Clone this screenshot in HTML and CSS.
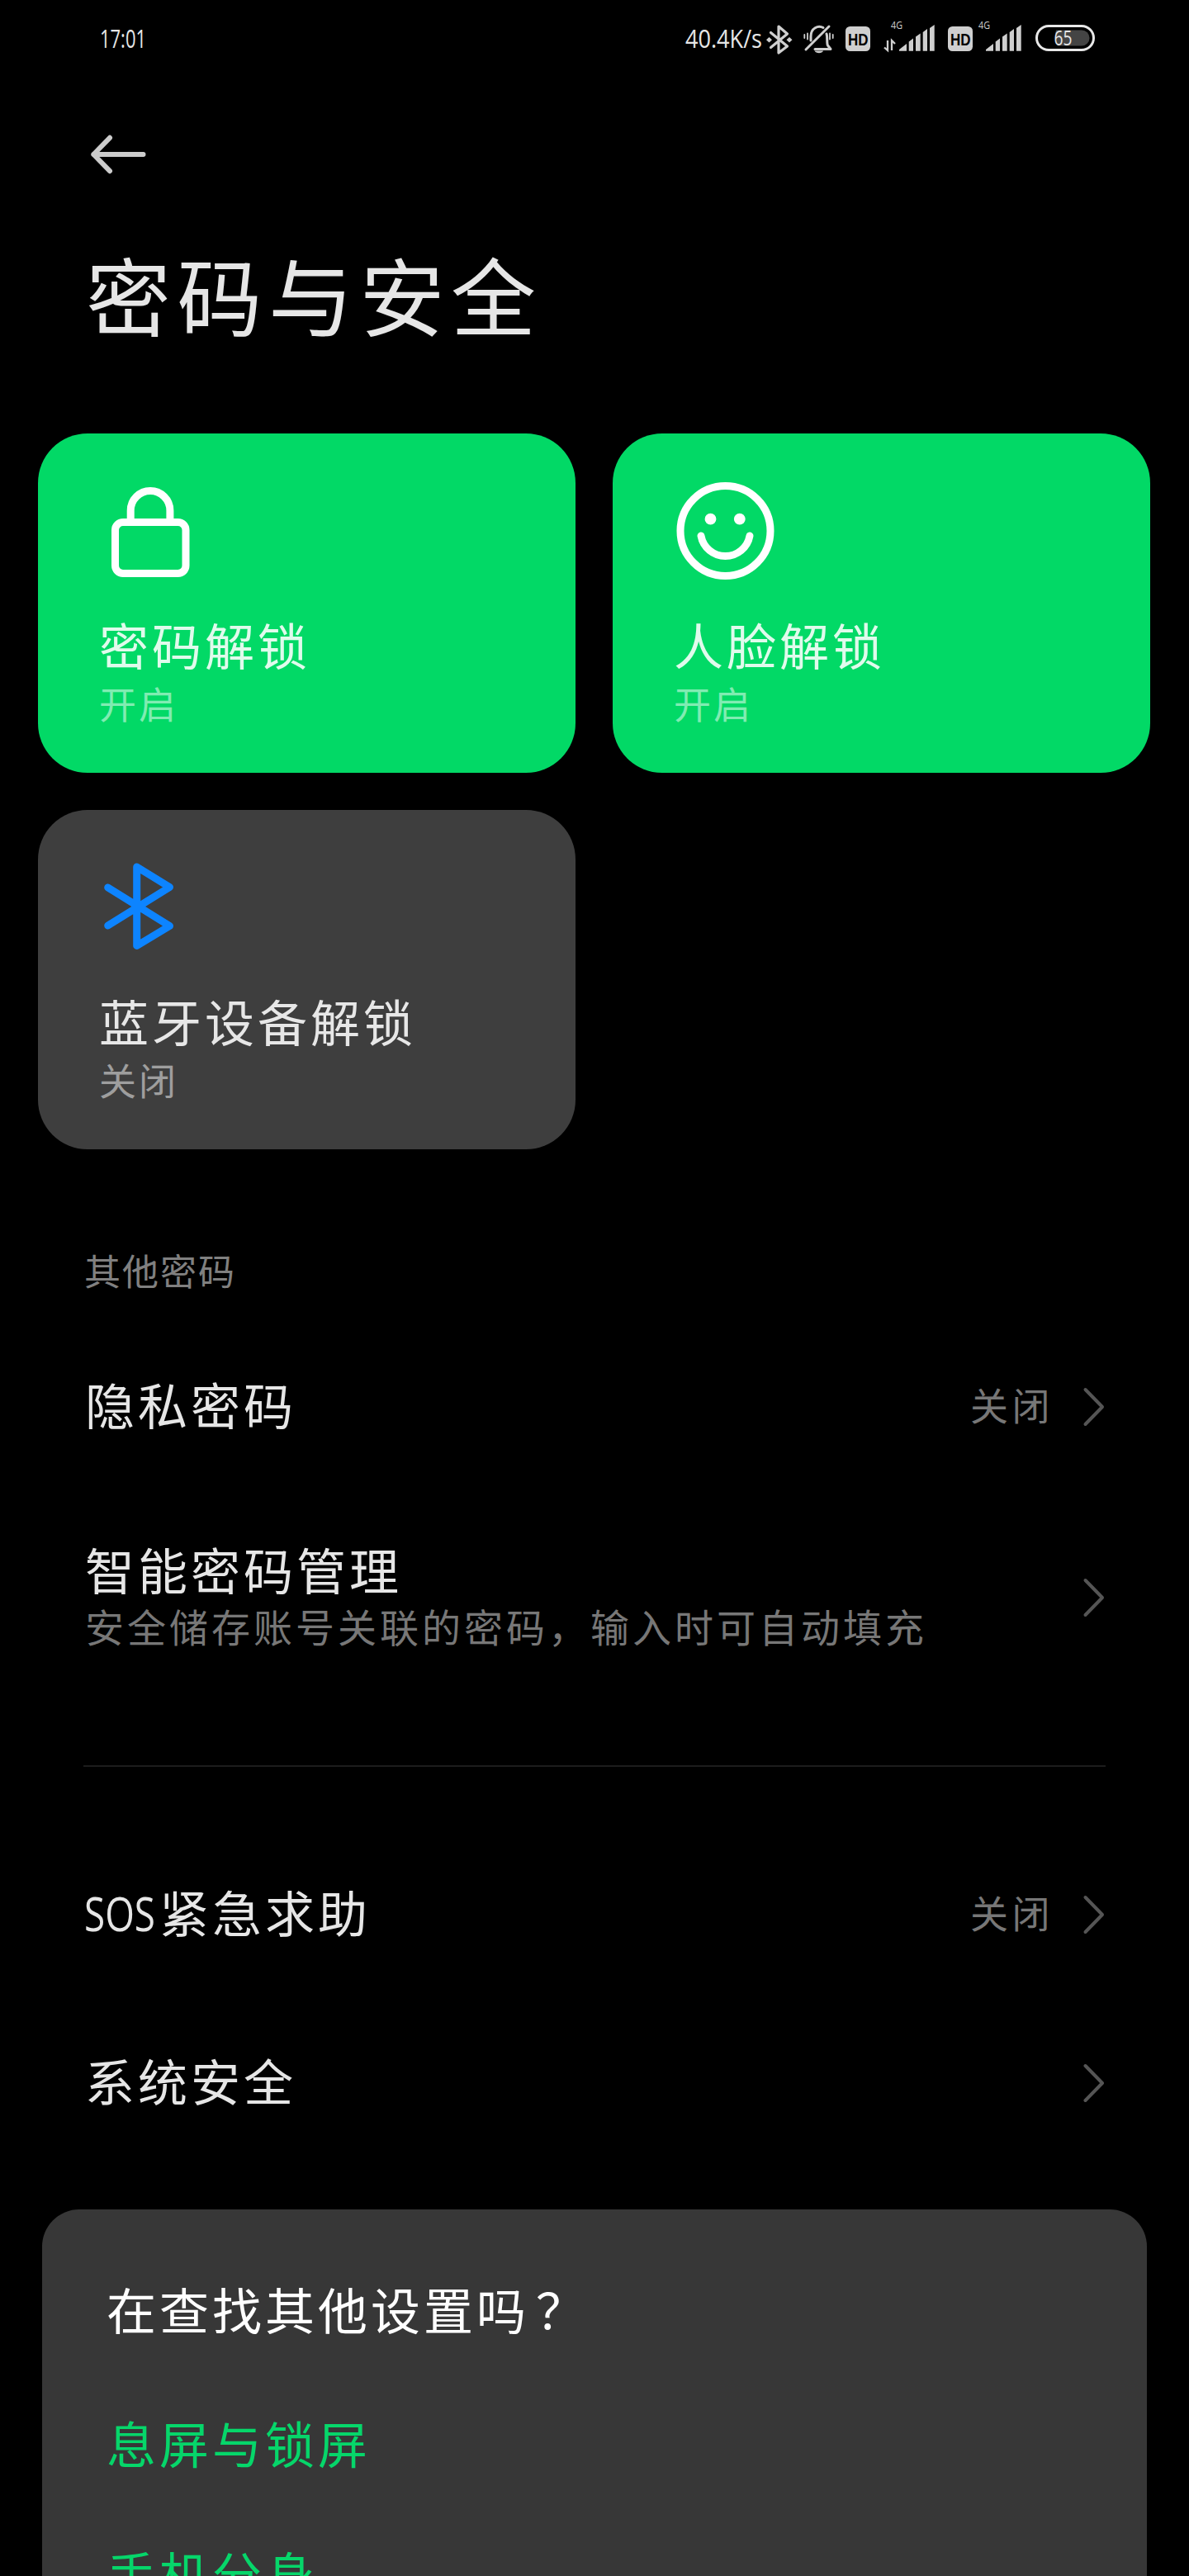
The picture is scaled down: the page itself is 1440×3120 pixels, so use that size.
FILE: index.html
```html
<!DOCTYPE html>
<html lang="zh-CN">
<head>
<meta charset="utf-8">
<title>密码与安全</title>
<link rel="stylesheet" href="styles.css">
</head>
<body>
<svg class="defs" width="0" height="0" aria-hidden="true">
  <symbol id="chevron" viewBox="0 0 30 50"><path d="M5.5 4L26 25L5.5 46" fill="none" stroke="#555" stroke-width="4" stroke-linecap="round" stroke-linejoin="round"/></symbol>
  <symbol id="bars" viewBox="0 0 44 32"><path d="M0 31.7V30L9 23V31.7ZM11.7 31.7V20.5L17 16.5V31.7ZM20 31.7V14.5L25.7 10.5V31.7ZM28.7 31.7V9L34 5V31.7ZM37 31.7V4L42.7 0V31.7Z" fill="#cfcfcf"/></symbol>
</svg>
<div class="screen">
  <header class="status">
    <svg class="clock" width="60" height="40"><text class="status-text" x="1" y="31" textLength="56" lengthAdjust="spacingAndGlyphs">17:01</text></svg>
    <div class="indicators">
      <svg width="96" height="40"><text class="status-text" x="0" y="31" textLength="93" lengthAdjust="spacingAndGlyphs">40.4K/s</text></svg>
      <svg class="bt-small" width="32" height="40" viewBox="0 0 32 40"><path d="M5.5 12.5L25.5 29L15 37V5L25.5 14L5.5 30.5" fill="none" stroke="#cfcfcf" stroke-width="3.2" stroke-linejoin="round" stroke-linecap="round"/><path d="M3.5 18L7 21.3L3.5 24.6L0 21.3ZM28 18L31.5 21.3L28 24.6L24.5 21.3Z" fill="#cfcfcf"/></svg>
      <svg class="bell" width="38" height="40" viewBox="0 0 38 40"><g fill="none" stroke="#cfcfcf" stroke-width="3" stroke-linecap="round"><path d="M3 33L31 5M9 22V17C9 7 18 3 24 6.500M28 14C29.500 18 28 25 29.500 28L33 32.500H14" stroke-linejoin="round"/><path d="M5 13.500V20.500M1.300 15V19M32 13.500V20.500M35.700 15V19" stroke-width="1.800"/></g><path d="M13.500 34.500H24C23 38 15 38 13.500 34.500Z" fill="#cfcfcf"/></svg>
      <div class="hd"><svg width="30" height="30"><text class="hd-text" x="3" y="22.500" textLength="24.500" lengthAdjust="spacingAndGlyphs">HD</text></svg></div>
      <div class="network">
        <svg width="30" height="12"><text class="net-text" x="9" y="10.500" textLength="14" lengthAdjust="spacingAndGlyphs">4G</text></svg>
        <svg class="arrows" width="16" height="14" viewBox="0 0 16 14"><path d="M5 1V13L1 9.500M10 13V1L14 5" fill="none" stroke="#cfcfcf" stroke-width="2.300"/></svg>
      </div>
      <svg class="bars" width="44" height="32"><use href="#bars"/></svg>
      <div class="hd second"><svg width="30" height="30"><text class="hd-text" x="3" y="22.500" textLength="24.500" lengthAdjust="spacingAndGlyphs">HD</text></svg></div>
      <div class="network two"><svg width="17" height="12"><text class="net-text" x="0" y="10.500" textLength="14" lengthAdjust="spacingAndGlyphs">4G</text></svg></div>
      <svg class="bars" width="44" height="32"><use href="#bars"/></svg>
      <svg class="battery" width="72" height="32" viewBox="0 0 72 32"><rect x="1.500" y="1.500" width="69" height="29" rx="14.500" fill="none" stroke="#e8e8e8" stroke-width="3"/><path d="M25 6.500H56A9.500 9.500 0 0 1 56 25.500H27Q22 16 25 6.500Z" fill="#444"/><text class="battery-text" x="22.500" y="24.500" textLength="22" lengthAdjust="spacingAndGlyphs">65</text></svg>
    </div>
  </header>
  <nav class="nav">
    <svg width="68" height="46" viewBox="0 0 68 46"><path d="M23 2.800L3.300 23L23 43.200M3.300 23H63.500" fill="none" stroke="#ccc" stroke-width="6" stroke-linecap="round" stroke-linejoin="round"/></svg>
  </nav>
  <h1 class="title">密码与安全</h1>
  <main>
    <section class="cards">
      <article class="card on">
        <svg class="card-icon" viewBox="0 0 120 124"><g fill="none" stroke="#fff" stroke-width="9"><rect x="19.500" y="52.500" width="85.500" height="62" rx="9.500"/><path d="M38.200 52V38.400a23.850 23.850 0 0 1 47.700 0V52"/></g></svg>
        <h2 class="card-title">密码解锁</h2><p class="card-state">开启</p>
      </article>
      <article class="card on">
        <svg class="card-icon" viewBox="0 0 120 124"><g fill="none" stroke="#fff" stroke-width="9" stroke-linecap="round"><circle cx="62.500" cy="63" r="54.500"/><path d="M33 69A30 30 0 0 0 92 69"/></g><circle cx="44.500" cy="48.700" r="6.900" fill="#fff"/><circle cx="79.800" cy="48.700" r="6.900" fill="#fff"/></svg>
        <h2 class="card-title">人脸解锁</h2><p class="card-state">开启</p>
      </article>
      <article class="card">
        <svg class="card-icon" viewBox="0 0 120 124"><path d="M10.700 39L85.500 85.500L45.700 109.500V14L85.500 38.500L10.700 85" fill="none" stroke="#0d84ff" stroke-width="9" stroke-linecap="round" stroke-linejoin="round"/></svg>
        <h2 class="card-title">蓝牙设备解锁</h2><p class="card-state">关闭</p>
      </article>
    </section>
    <h3 class="label">其他密码</h3>
    <div class="row first"><div class="row-text"><div class="row-title">隐私密码</div></div><span class="value">关闭</span><svg class="chev"><use href="#chevron"/></svg></div>
    <div class="row smart"><div class="row-text"><div class="row-title">智能密码管理</div><div class="desc">安全储存账号关联的密码，输入时可自动填充</div></div><svg class="chev"><use href="#chevron"/></svg></div>
    <hr class="divider">
    <div class="row sos"><div class="row-text"><div class="row-title with-latin"><svg width="90" height="72"><text class="latin" x="-1" y="60" textLength="86" lengthAdjust="spacingAndGlyphs">SOS</text></svg><span>紧急求助</span></div></div><span class="value">关闭</span><svg class="chev"><use href="#chevron"/></svg></div>
    <div class="row system"><div class="row-text"><div class="row-title">系统安全</div></div><svg class="chev"><use href="#chevron"/></svg></div>
    <aside class="panel">
      <div class="question">在查找其他设置吗<span class="mark">？</span></div>
      <a class="link">息屏与锁屏</a>
      <a class="link last">手机分身</a>
    </aside>
  </main>
</div>
</body>
</html>
```

FILE: styles.css
```css
* { box-sizing: border-box; }
body { margin: 0; background: #000; color: #e6e6e6; font-family: "Noto Sans CJK SC", sans-serif; font-weight: 400; }
h1, h2, h3, p { margin: 0; font-weight: 400; }
svg { display: block; flex: none; overflow: visible; }
.defs { position: absolute; }
.screen { width: 1440px; height: 3120px; overflow: hidden; background: #000; }

.status { height: 94px; padding: 27px 114px 0 120px; display: flex; justify-content: space-between; align-items: flex-start; }
.status-text { font: 31px "Open Sans", sans-serif; fill: #e6e6e6; }
.indicators { display: flex; align-items: flex-start; }
.bt-small { margin-left: 2px; }
.bell { margin-left: 13px; }
.hd { width: 30px; height: 30px; border-radius: 5.500px; background: #cfcfcf; margin: 4.700px 0 0 13px; }
.hd-text { font: bold 20px "Liberation Sans", sans-serif; fill: #000; }
.network { width: 35px; margin-top: -3px; padding-left: 16px; }
.network .arrows { margin-top: 12px; }
.network.two { width: 17px; padding: 0; margin-left: 7px; }
.network.two + .bars { margin-left: -8px; }
.net-text { font: 13px "Open Sans", sans-serif; fill: #cfcfcf; }
.bars { margin-top: 3px; }
.hd.second { margin-left: 15px; }
.battery { margin: 3px 0 0 16px; }
.battery-text { font: 25px "Open Sans", sans-serif; fill: #e6e6e6; }

.nav { padding: 70px 0 0 110px; height: 202px; }
.title { height: 120px; line-height: 120px; padding-left: 104px; font-size: 103px; letter-spacing: 7.500px; }

.cards { display: grid; grid-template-columns: 651px 651px; grid-auto-rows: 411px; gap: 45px; margin: 109px 0 0 46px; }
.card { border-radius: 60px; background: #3e3e3e; padding: 55px 0 0 74px; }
.card.on { background: #02d966; }
.card-icon { width: 120px; height: 124px; margin-bottom: 40px; }
.card-title { font-size: 60px; line-height: 72px; letter-spacing: 4px; color: rgba(255, 255, 255, .88); }
.card-state { margin-top: 8px; font-size: 45px; line-height: 56px; letter-spacing: 3px; color: rgba(255, 255, 255, .5); }

.label { margin: 116px 0 0 102px; font-size: 44px; line-height: 60px; letter-spacing: 2px; color: #808080; }
.row { height: 200px; padding: 0 101px 0 103px; display: flex; align-items: center; }
.row.first { margin-top: 36px; }
.row.smart { margin-top: 31px; }
.row.sos { margin-top: 79px; }
.row.system { margin-top: 4px; }
.row-text { flex: 1; margin-bottom: 9px; }
.row-title { font-size: 60px; line-height: 72px; letter-spacing: 4px; }
.with-latin { display: flex; }
.latin { font: 57px "Open Sans", sans-serif; letter-spacing: 0; fill: #e6e6e6; }
.smart .row-text { margin-bottom: 5px; }
.desc { font-size: 47px; line-height: 66px; letter-spacing: 4px; color: #777; }
.value { font-size: 46px; line-height: 60px; letter-spacing: 4.500px; margin: 0 33px 9px 0; color: #777; }
.chev { width: 30px; height: 50px; }
.divider { height: 2px; border: 0; margin: 103px 101px 0; background: #1c1c1c; }

.panel { width: 1338px; height: 444px; margin: 53px 0 0 51px; padding: 80px 0 0 78px; border-radius: 45px 45px 0 0; background: #373737; overflow: hidden; font-size: 60px; line-height: 80px; letter-spacing: 4px; }
.question { color: #fff; }
.mark { margin-left: 8px; }
.link { display: block; margin-top: 82px; color: #06d66a; }
.link.last { margin-top: 78px; }
```
